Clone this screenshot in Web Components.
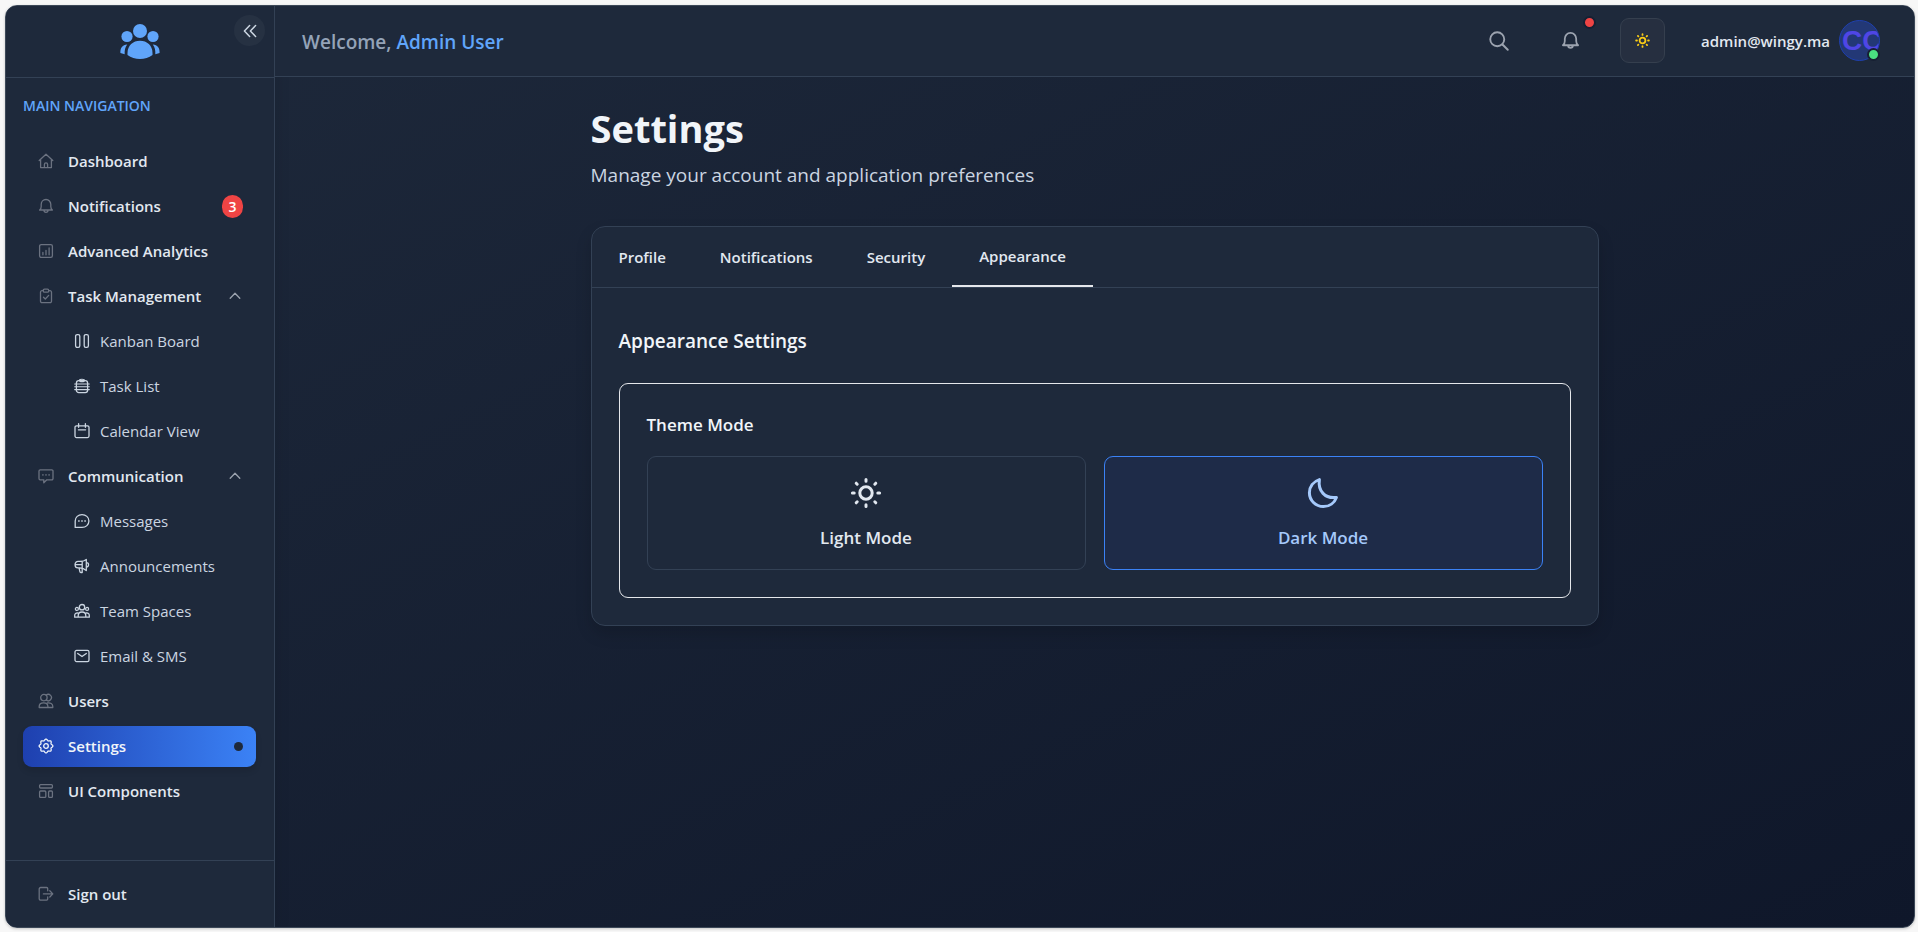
<!DOCTYPE html>
<html lang="en">
<head>
<meta charset="utf-8">
<title>Settings</title>
<style>
  :root {
    --panel: #1e293b;
    --line: #334155;
    --text: #e2e8f0;
    --soft: #cbd5e1;
    --muted: #6b7280;
    --blue: #60a5fa;
    --strong: #f1f5f9;
  }
  * { box-sizing: border-box; }
  body {
    margin: 0;
    padding: 5px 3px 4px 5px;
    min-height: 100vh;
    display: flex;
    background: #f7f7f7;
    color: var(--text);
    font: 400 15px/20px "Open Sans", "Noto Sans", sans-serif;
  }
</style>
</head>
<body>
<app-shell>
  <side-nav slot="side">
    <nav-item icon="home">Dashboard</nav-item>
    <nav-item icon="bell" badge="3">Notifications</nav-item>
    <nav-item icon="chart">Advanced Analytics</nav-item>
    <nav-item icon="task" expandable>Task Management</nav-item>
    <nav-item icon="kanban" sub>Kanban Board</nav-item>
    <nav-item icon="list" sub>Task List</nav-item>
    <nav-item icon="calendar" sub>Calendar View</nav-item>
    <nav-item icon="comment" expandable>Communication</nav-item>
    <nav-item icon="chat" sub>Messages</nav-item>
    <nav-item icon="megaphone" sub>Announcements</nav-item>
    <nav-item icon="team" sub>Team Spaces</nav-item>
    <nav-item icon="mail" sub>Email &amp; SMS</nav-item>
    <nav-item icon="users">Users</nav-item>
    <nav-item icon="gear" active>Settings</nav-item>
    <nav-item icon="layout">UI Components</nav-item>
    <nav-item icon="logout" slot="footer">Sign out</nav-item>
  </side-nav>
  <top-bar slot="top"></top-bar>
  <settings-page></settings-page>
</app-shell>

<script>
const gearPath = (() => {
  let d = '';
  for (let i = 0; i <= 96; i++) {
    const a = i / 96 * Math.PI * 2, r = 6.2 + 0.7 * Math.cos(8 * a);
    d += (i ? 'L' : 'M') + (8 + r * Math.cos(a)).toFixed(2) + ' ' + (8 + r * Math.sin(a)).toFixed(2);
  }
  return d + 'Z';
})();

const ICONS = {
  home: '<path d="M1.2 7.6 8 1.3l6.8 6.3M2.6 6.5v8.1h10.8V6.5M6.4 14.5v-3a1.6 1.6 0 0 1 3.2 0v3"/>',
  bell: '<path d="M1.600 12h12.800c-1.200-.9-1.600-1.900-1.600-3.600V6.600C12.800 3.700 10.700 1.500 8 1.500S3.200 3.700 3.200 6.600v1.800C3.200 10.100 2.800 11.100 1.600 12zM6 12.300a2 2 0 0 0 4 0"/>',
  chart: '<rect x="1.6" y="1.6" width="12.8" height="12.8" rx="1.6"/><path d="M4.9 9.500v2.300M8 7.500v4.300M11.100 5v6.800"/>',
  task: '<path d="M5 2.700H4a1.500 1.500 0 0 0-1.500 1.500v9A1.500 1.500 0 0 0 4 14.700h8a1.500 1.500 0 0 0 1.500-1.500v-9A1.500 1.500 0 0 0 12 2.700h-1"/><rect x="5.300" y="1.200" width="5.400" height="3" rx="1.200"/><path d="m5.500 9.200 1.800 1.800 3.400-3.600"/>',
  comment: '<path d="M2.200 1.800h11.600a1.200 1.200 0 0 1 1.200 1.200v7.600a1.200 1.200 0 0 1-1.200 1.200H8.800l-3 3v-3H2.200A1.200 1.200 0 0 1 1 10.600V3a1.200 1.200 0 0 1 1.200-1.200z"/><path d="M4.600 6.900h.6M7.700 6.900h.6M10.800 6.900h.6"/>',
  users: '<circle cx="5.900" cy="4.600" r="3.200"/><path d="M8.200 2.100a3.200 3.200 0 1 1 0 5M1.200 14.500v-1c0-2.200 1.800-3.600 4.300-3.600s4.400 1.400 4.400 3.600v1zM9.300 9.900c3.200-.4 5.500 1 5.500 3.600v1H9.900"/>',
  gear: '<path d="' + gearPath + '"/><circle cx="8" cy="8" r="2.300"/>',
  layout: '<rect x="1.600" y="1.600" width="12.800" height="3.400" rx="1"/><rect x="1.600" y="8" width="6.200" height="6.400" rx="1"/><rect x="10.600" y="8" width="3.800" height="6.400" rx="1"/>',
  logout: '<path d="M9.700 4.800V2.600a1.100 1.100 0 0 0-1.100-1.100H2.700a1.500 1.500 0 0 0-1.500 1.500v9.700a1.500 1.500 0 0 0 1.500 1.500h5.900a1.100 1.100 0 0 0 1.100-1.100v-2.200M5.400 7.900h9.200M11.800 4.800l3 3.100-3 3.100"/>',
  kanban: '<rect x="1.600" y="1.600" width="4.200" height="12.800" rx="1.600"/><rect x="10.200" y="1.600" width="4.200" height="12.800" rx="1.600"/>',
  list: '<rect x="2.400" y="2.600" width="11.200" height="12" rx="2.400"/><path d="M5.400 2.400c0-1.600 5.200-1.600 5.200 0S5.400 4 5.400 2.400M.7 6h14.600M.7 8.800h14.600M.7 11.600h14.600" stroke-width="1.100"/>',
  calendar: '<rect x="1" y="2.800" width="14" height="11.800" rx="1.500"/><path d="M4.600.700v3.600M11.400.700v3.600M4.400 6.800h7.200"/>',
  chat: '<path d="M1.200 14.400V8C1.200 4.200 4.200 1.600 8 1.600S14.900 4.200 14.900 8s-3 6.400-6.900 6.400z"/><path d="M4.600 8h.6M7.700 8h.6M10.800 8h.6"/>',
  megaphone: '<path d="M12.300 1.400v11.200C10.500 10.700 8.300 9.800 5.800 9.800H4A2.900 2.900 0 0 1 1.100 6.900v-.6A2.900 2.900 0 0 1 4 3.400h1.800c2.500 0 4.700-.4 6.500-2zM12.600 4.600c2.600 0 2.600 4.300 0 4.300M5 9.900l.9 3.700a1 1 0 0 0 1 .9h1.300V3.300M1.400 6.600h6.500"/>',
  team: '<circle cx="8" cy="4.200" r="2.700"/><circle cx="2.900" cy="5.900" r="1.500"/><circle cx="13.100" cy="5.900" r="1.500"/><path d="M4.200 14.200v-1.600C4.200 10.200 5.800 9 8 9s3.800 1.200 3.800 3.600v1.600zM4.200 14.200H.7v-1.800c0-1.600 1.400-2.600 3-2.400M11.800 14.200h3.500v-1.800c0-1.600-1.400-2.600-3-2.400"/>',
  mail: '<rect x="1" y="2.400" width="14" height="11.200" rx="1.600"/><path d="m3.700 5.400 4.300 3.200 4.300-3.200"/>',
  up: '<path d="m3.200 10.300 4.800-5 4.800 5"/>',
  collapse: '<path d="M7.600 1.800 1.600 8l6 6.200M14.400 1.800 8.400 8l6 6.200"/>',
  search: '<circle cx="6.600" cy="6.600" r="5.600"/><path d="m10.800 10.800 4.200 4.200"/>',
  sun: '<circle cx="8" cy="8" r="3.100"/><path d="M8 1.200v.9M8 13.900v.9M1.200 8h.9M13.900 8h.9M3.100 3.100l.5.500M12.400 12.400l.5.500M3.100 12.900l.5-.5M12.400 3.600l.5-.5"/>',
  moon: '<path d="M6.200 1.300C5.400 7 9 11 14.700 10.200c-1 2.800-3.500 4.600-6.500 4.600C4.300 14.800 1.200 11.700 1.200 7.900c0-3 1.900-5.600 5-6.600z"/>',
  logo: '<g fill="currentColor" stroke="none"><circle cx="20" cy="8" r="7"/><circle cx="7" cy="13.500" r="5.600"/><circle cx="33" cy="13.500" r="5.600"/><path d="M7.500 32V30C7.500 22.500 13 17.700 20 17.700S32.500 22.500 32.500 30v2c-3.500 2.500-7.900 4-12.500 4S11 34.500 7.500 32zM7.200 21.600C5 24.500 4.500 27.500 4.700 31.200L.4 30C.2 25 2.500 21.800 7.200 21.600zM32.800 21.600c2.200 2.900 2.700 5.900 2.500 9.600l4.300-1.200c.2-5-2.100-8.200-6.800-8.400z"/></g>'
};

const define = (name, render) => customElements.define(name, class extends HTMLElement {
  connectedCallback() {
    if (this.shadowRoot) return;
    const t = document.createElement('template');
    t.innerHTML = render(this);
    this.attachShadow({ mode: 'open' }).append(t.content.cloneNode(true));
  }
});

const reset = '*{box-sizing:border-box}button{font:inherit;color:inherit;background:none;border:0;padding:0;margin:0;cursor:pointer}';

define('ui-icon', el => {
  const size = el.getAttribute('size') || 16;
  const box = el.getAttribute('box') || 16;
  const weight = el.getAttribute('weight') || 1.3;
  return `<style>:host{display:block;width:${size}px;height:${size}px;flex:none}svg{display:block}</style>
  <svg width="${size}" height="${size}" viewBox="0 0 ${box} ${box}" fill="none" stroke="currentColor" stroke-width="${weight}" stroke-linecap="round" stroke-linejoin="round" aria-hidden="true">${ICONS[el.getAttribute('name')]}</svg>`;
});

define('app-shell', () => `<style>${reset}
  :host{display:flex;flex:1;min-width:0;border:1px solid #3c4858;border-radius:12px;overflow:hidden;
    background:linear-gradient(to bottom right,#1e293b,#0f172a);box-shadow:0 1px 3px rgba(0,0,0,.2)}
  .main{flex:1;min-width:0;display:flex;flex-direction:column}
  </style><slot name="side"></slot><div class="main"><slot name="top"></slot><slot></slot></div>`);

define('side-nav', () => `<style>${reset}
  :host{display:flex;flex-direction:column;flex:none;width:269px;background:var(--panel);border-right:1px solid var(--line);box-shadow:4px 0 12px rgba(0,0,0,.08)}
  .head{position:relative;height:72px;padding-top:3px;display:flex;align-items:center;justify-content:center;border-bottom:1px solid var(--line);color:var(--blue)}
  .fold{position:absolute;top:9px;right:9px;width:31px;height:31px;border-radius:50%;background:#263142;display:grid;place-items:center;color:var(--soft)}
  h2{margin:0 0 25px;font-size:14px;font-weight:600;line-height:20px;color:var(--blue)}
  nav{flex:1;padding:18px 18px 18px 17px;display:flex;flex-direction:column}
  .items{display:flex;flex-direction:column;gap:4px}
  .foot{border-top:1px solid var(--line);padding:13px 18px 12px 17px}
  </style>
  <div class="head"><ui-icon name="logo" size="40" box="40"></ui-icon>
  <button class="fold" aria-label="Collapse sidebar"><ui-icon name="collapse" size="14" weight="1.7"></ui-icon></button></div>
  <nav><h2>MAIN NAVIGATION</h2><div class="items"><slot></slot></div></nav>
  <div class="foot"><slot name="footer"></slot></div>`);

define('nav-item', el => `<style>${reset}
  :host{display:block}
  a{display:flex;align-items:center;gap:12px;height:41px;padding:0 13px 1px;border-radius:9px;color:var(--text);font-weight:600;text-decoration:none;white-space:nowrap}
  .ico{width:20px;display:grid;place-items:center;color:var(--muted)}
  .label{flex:1}
  :host([sub]) a{padding-left:50px;gap:9px;font-weight:400;color:var(--soft)}
  :host([sub]) .ico{width:18px;color:inherit}
  :host([active]) a{background:linear-gradient(90deg,#1e40af,#3b82f6);color:var(--strong);box-shadow:0 4px 6px rgba(0,0,0,.12)}
  :host([active]) .ico{color:inherit}
  .dot{width:9px;height:9px;border-radius:50%;background:var(--panel)}
  .badge{min-width:21px;height:23px;border-radius:12px;background:#ef4444;color:#fff;font-size:14px;line-height:23px;text-align:center}
  .arrow{color:#9ca3af}
  </style><a href="#"><span class="ico"><ui-icon name="${el.getAttribute('icon')}"></ui-icon></span><span class="label"><slot></slot></span>
  ${el.hasAttribute('badge') ? `<span class="badge">${el.getAttribute('badge')}</span>` : ''}
  ${el.hasAttribute('expandable') ? '<ui-icon class="arrow" name="up"></ui-icon>' : ''}
  ${el.hasAttribute('active') ? '<span class="dot"></span>' : ''}</a>`);

define('top-bar', () => `<style>${reset}
  :host{display:flex;align-items:center;justify-content:space-between;height:71px;padding:0 25px 1px 27px;background:var(--panel);border-bottom:1px solid var(--line)}
  .hello{padding-top:3px;font-size:19px;font-weight:600;line-height:28px;color:#94a3b8}
  .hello b{font-weight:600;color:var(--blue)}
  .tools{display:flex;align-items:center;gap:27px}
  .tool{position:relative;width:45px;height:45px;display:grid;place-items:center;color:#9ca3af;border-radius:9px}
  .theme{background:#262f40;border:1px solid #353f4e;color:#facc15}
  .ping{position:absolute;top:-2px;right:-3px;width:13px;height:13px;border:2px solid #172033;border-radius:50%;background:#ef4444}
  .user{display:flex;align-items:center;gap:9px;padding:0 9px;font-weight:600}
  .pic{position:relative}
  .face{display:block;width:41px;height:41px;border:1px solid #1e40af;border-radius:50%;overflow:hidden;background:#233876;color:#4f46e5;padding-left:2px;font:700 28px/39px "Liberation Sans",sans-serif;text-align:left;white-space:nowrap}
  .on{position:absolute;right:0;bottom:0;width:13px;height:13px;border:2px solid #172033;border-radius:50%;background:#4ade80}
  </style>
  <div class="hello">Welcome, <b>Admin User</b></div>
  <div class="tools">
    <button class="tool" aria-label="Search"><ui-icon name="search" size="20" weight="1.5"></ui-icon></button>
    <button class="tool" aria-label="Alerts"><ui-icon name="bell" size="19" weight="1.5"></ui-icon><span class="ping"></span></button>
    <button class="tool theme" aria-label="Switch theme"><ui-icon name="sun" size="15" weight="1.9"></ui-icon></button>
    <button class="user"><span>admin@wingy.ma</span><span class="pic"><span class="face">CC</span><span class="on"></span></span></button>
  </div>`);

define('settings-page', () => `<style>${reset}
  :host{display:block;flex:1;padding:28px 27px 27px}
  .wrap{max-width:1008px;margin:0 auto}
  h1{margin:0 0 10px;font-size:38px;font-weight:700;line-height:46px;color:var(--strong)}
  .lead{margin:0 0 37px;font-size:19px;line-height:28px;color:var(--soft)}
  .card{border:1px solid var(--line);border-radius:14px;background:var(--panel);box-shadow:0 8px 16px rgba(0,0,0,.15)}
  .tabs{display:flex;border-bottom:1px solid var(--line)}
  .tabs button{height:60px;padding:0 27px;font-weight:600}
  .tabs [aria-selected=true]{border-bottom:2px solid #e5e7eb}
  .body{padding:38px 27px 27px}
  h2{margin:0 0 27px;font-size:19px;font-weight:600;line-height:30px;color:var(--strong)}
  .box{border:1px solid #e5e7eb;border-radius:9px;padding:27px}
  h3{margin:0 0 18px;font-size:17px;font-weight:600;line-height:27px;color:var(--strong)}
  .grid{display:grid;grid-template-columns:1fr 1fr;gap:18px}
  </style>
  <div class="wrap"><h1>Settings</h1><p class="lead">Manage your account and application preferences</p>
  <section class="card">
    <div class="tabs" role="tablist"><button role="tab">Profile</button><button role="tab">Notifications</button><button role="tab">Security</button><button role="tab" aria-selected="true">Appearance</button></div>
    <div class="body"><h2>Appearance Settings</h2>
      <div class="box"><h3>Theme Mode</h3><div class="grid">
        <theme-option icon="sun">Light Mode</theme-option>
        <theme-option icon="moon" selected>Dark Mode</theme-option>
      </div></div>
    </div>
  </section></div>`);

define('theme-option', el => `<style>${reset}
  :host{display:block}
  button{width:100%;display:flex;flex-direction:column;align-items:center;gap:13px;padding:18px;border:1px solid var(--line);border-radius:9px;font-size:17px;font-weight:600;line-height:27px;color:var(--text)}
  .ico{width:36px;height:36px;display:grid;place-items:center}
  :host([selected]) button{background:#1e2b48;border-color:#3b82f6;color:#a5c9fb}
  </style><button aria-pressed="${el.hasAttribute('selected')}"><span class="ico"><ui-icon name="${el.getAttribute('icon')}" size="32" weight="1.5"></ui-icon></span><slot></slot></button>`);
</script>
</body>
</html>
